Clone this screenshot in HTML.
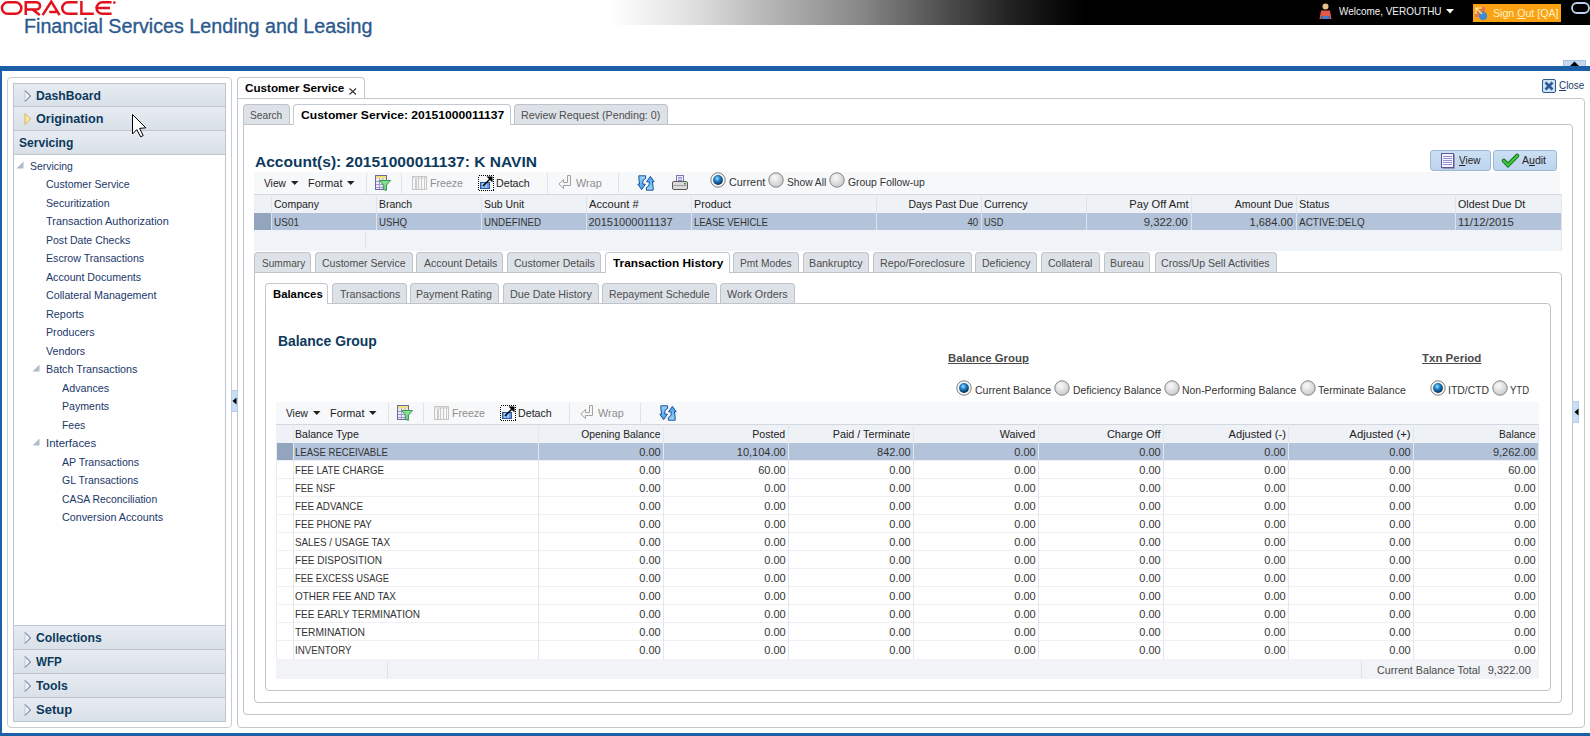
<!DOCTYPE html><html><head><meta charset="utf-8"><style>
*{box-sizing:border-box;margin:0;padding:0}
html,body{width:1590px;height:736px;overflow:hidden;background:#fff}
body{position:relative;font-family:"Liberation Sans",sans-serif;font-size:11px;color:#333}
.a{position:absolute}
.t{position:absolute;white-space:nowrap;line-height:1}
svg{position:absolute;overflow:visible}
</style></head><body>
<div class="a" style="left:0px;top:0px;width:1590px;height:25px;background:linear-gradient(to right,#fff 0px,#fff 610px,#f0f0f0 650px,#dcdcdc 700px,#bababa 760px,#888 860px,#444 960px,#222 1010px,#0a0a0a 1060px,#000 1085px,#000 1590px)"></div>
<svg style="left:0;top:0" width="120" height="18" viewBox="0 0 120 18">
<g fill="none" stroke="#e3111b" stroke-width="2.5">
<rect x="1.95" y="2.35" width="19.4" height="11.5" rx="5.75"/>
<path d="M25.75 15.1 V2.35 H36.65 A3.58 3.58 0 0 1 36.65 9.5 H27 M32.5 9.5 L39.8 15.1"/>
<path d="M42.6 15.1 L51.3 1.6 L59.6 15.1 M49.2 11.9 H56.6"/>
<path d="M77.6 2.35 H68 A5.75 5.75 0 0 0 68 13.85 H77.6"/>
<path d="M81.4 1.1 V13.85 H93.8"/>
<path d="M111.6 2.35 H102.3 A5.75 5.75 0 0 0 102.3 13.85 H111.6 M97.5 8.1 H110"/>
</g>
<circle cx="114.3" cy="2.6" r="1.3" fill="#e3111b"/>
</svg>
<div class="t" style="left:24.2px;top:16.30px;font-size:20px;color:#2c5a8e;transform:scaleX(0.9853);transform-origin:left 0;-webkit-text-stroke:0.35px #2c5a8e;">Financial Services Lending and Leasing</div>
<svg style="left:1319px;top:3px" width="14" height="18">
<circle cx="6.5" cy="3.5" r="3" fill="#e8c08a"/>
<path d="M2 7.5 H11 L12.5 16 H10.5 V13 H2.5 V16 H0.5 Z" fill="#e05a45"/>
<rect x="2.5" y="13" width="8" height="3" fill="#4a7ac8"/>
</svg>
<div class="t" style="left:1339px;top:6.20px;font-size:11px;color:#f2f2f2;transform:scaleX(0.9032);transform-origin:left 0;">Welcome, VEROUTHU</div>
<svg style="left:1446px;top:9px" width="8" height="5"><path d="M0 0 H8 L4 4.5 Z" fill="#fff"/></svg>
<div class="a" style="left:1473px;top:4px;width:88px;height:18px;background:#fba213"></div>
<svg style="left:1475px;top:7px" width="13" height="13">
<rect x="0" y="0" width="10" height="10" fill="#e0784a"/>
<circle cx="8" cy="9" r="4" fill="#3a8ad8"/>
<path d="M1 1 L7 7 M1 7 V1 H7" stroke="#ffe27a" stroke-width="1.5" fill="none"/>
</svg>
<div class="t" style="left:1493.3px;top:8.20px;font-size:11px;color:#fff3cc;transform:scaleX(0.9641);transform-origin:left 0;">Sign <u>O</u>ut [QA]</div>
<svg style="left:1571px;top:2px" width="19" height="12"><rect x="1" y="1" width="17" height="10" rx="5" fill="none" stroke="#bcd3f0" stroke-width="1.8"/></svg>
<div class="a" style="left:0px;top:66px;width:1590px;height:5px;background:#1c5fa6"></div>
<div class="a" style="left:0px;top:70px;width:2px;height:666px;background:#1c5fa6"></div>
<div class="a" style="left:0px;top:733px;width:1590px;height:3px;background:#1c5fa6"></div>
<div class="a" style="left:1563px;top:60px;width:23px;height:6px;background:#c4d7ee;border:1px solid #a9c1e0;border-bottom:none"></div>
<svg style="left:1570px;top:61px" width="9" height="5"><path d="M0 5 L4.5 0.5 L9 5 Z" fill="#000"/></svg>
<div class="a" style="left:7px;top:77px;width:225px;height:651px;border:1px solid #c8cccf;border-radius:4px"></div>
<div class="a" style="left:13px;top:154px;width:213px;height:471px;border-left:1px solid #bcc4ce;border-right:1px solid #bcc4ce"></div>
<div class="a" style="left:13px;top:83px;width:213px;height:24px;border:1px solid #bec5ce;background:linear-gradient(#e8ecf2,#d9e0e8)"></div>
<svg style="left:23.5px;top:89.5px" width="8" height="12"><path d="M1 0.5 L6.5 6 L1 11.5 Z" fill="#eef2f8" stroke="#b5c0d0" stroke-width="0.8"/><path d="M1 0.5 L6.5 6 L1 11.5" fill="none" stroke="#4f6788" stroke-width="0.9"/></svg>
<div class="t" style="left:36px;top:89.90px;font-size:12px;color:#0d395c;font-weight:bold;transform:scaleX(1.0123);transform-origin:left 0;">DashBoard</div>
<div class="a" style="left:13px;top:106px;width:213px;height:25px;border:1px solid #bec5ce;background:linear-gradient(#e8ecf2,#d9e0e8)"></div>
<svg style="left:23.5px;top:113.0px" width="8" height="12"><path d="M1 0.5 L6.5 6 L1 11.5 Z" fill="#fbeaa9" stroke="#d8b24e" stroke-width="1"/></svg>
<div class="t" style="left:36px;top:113.40px;font-size:12px;color:#0d395c;font-weight:bold;transform:scaleX(1.0552);transform-origin:left 0;">Origination</div>
<div class="a" style="left:13px;top:130px;width:213px;height:25px;border:1px solid #bec5ce;background:linear-gradient(#e8ecf2,#d9e0e8)"></div>
<div class="t" style="left:19px;top:137.40px;font-size:12px;color:#0d395c;font-weight:bold;transform:scaleX(1.0056);transform-origin:left 0;">Servicing</div>
<div class="a" style="left:13px;top:625px;width:213px;height:25px;border:1px solid #bec5ce;background:linear-gradient(#e8ecf2,#d9e0e8)"></div>
<svg style="left:23.5px;top:632.0px" width="8" height="12"><path d="M1 0.5 L6.5 6 L1 11.5 Z" fill="#eef2f8" stroke="#b5c0d0" stroke-width="0.8"/><path d="M1 0.5 L6.5 6 L1 11.5" fill="none" stroke="#4f6788" stroke-width="0.9"/></svg>
<div class="t" style="left:36px;top:632.40px;font-size:12px;color:#0d395c;font-weight:bold;transform:scaleX(1.0177);transform-origin:left 0;">Collections</div>
<div class="a" style="left:13px;top:649px;width:213px;height:25px;border:1px solid #bec5ce;background:linear-gradient(#e8ecf2,#d9e0e8)"></div>
<svg style="left:23.5px;top:656.0px" width="8" height="12"><path d="M1 0.5 L6.5 6 L1 11.5 Z" fill="#eef2f8" stroke="#b5c0d0" stroke-width="0.8"/><path d="M1 0.5 L6.5 6 L1 11.5" fill="none" stroke="#4f6788" stroke-width="0.9"/></svg>
<div class="t" style="left:36px;top:656.40px;font-size:12px;color:#0d395c;font-weight:bold;transform:scaleX(0.9679);transform-origin:left 0;">WFP</div>
<div class="a" style="left:13px;top:673px;width:213px;height:25px;border:1px solid #bec5ce;background:linear-gradient(#e8ecf2,#d9e0e8)"></div>
<svg style="left:23.5px;top:680.0px" width="8" height="12"><path d="M1 0.5 L6.5 6 L1 11.5 Z" fill="#eef2f8" stroke="#b5c0d0" stroke-width="0.8"/><path d="M1 0.5 L6.5 6 L1 11.5" fill="none" stroke="#4f6788" stroke-width="0.9"/></svg>
<div class="t" style="left:36px;top:680.40px;font-size:12px;color:#0d395c;font-weight:bold;transform:scaleX(1.0195);transform-origin:left 0;">Tools</div>
<div class="a" style="left:13px;top:697px;width:213px;height:25px;border:1px solid #bec5ce;background:linear-gradient(#e8ecf2,#d9e0e8)"></div>
<svg style="left:23.5px;top:704.0px" width="8" height="12"><path d="M1 0.5 L6.5 6 L1 11.5 Z" fill="#eef2f8" stroke="#b5c0d0" stroke-width="0.8"/><path d="M1 0.5 L6.5 6 L1 11.5" fill="none" stroke="#4f6788" stroke-width="0.9"/></svg>
<div class="t" style="left:36px;top:704.40px;font-size:12px;color:#0d395c;font-weight:bold;transform:scaleX(1.0892);transform-origin:left 0;">Setup</div>
<div class="t" style="left:30px;top:160.80px;font-size:11px;color:#1b376a;transform:scaleX(0.9459);transform-origin:left 0;">Servicing</div>
<svg style="left:15.5px;top:161.0px" width="8" height="8"><path d="M7.5 0.5 L7.5 7.5 L0.5 7.5 Z" fill="#b0bccb"/></svg>
<div class="t" style="left:46px;top:178.80px;font-size:11px;color:#1b376a;transform:scaleX(0.9573);transform-origin:left 0;">Customer Service</div>
<div class="t" style="left:46px;top:197.80px;font-size:11px;color:#1b376a;transform:scaleX(0.9627);transform-origin:left 0;">Securitization</div>
<div class="t" style="left:46px;top:215.80px;font-size:11px;color:#1b376a;transform:scaleX(0.9919);transform-origin:left 0;">Transaction Authorization</div>
<div class="t" style="left:46px;top:234.80px;font-size:11px;color:#1b376a;transform:scaleX(0.9569);transform-origin:left 0;">Post Date Checks</div>
<div class="t" style="left:46px;top:252.80px;font-size:11px;color:#1b376a;transform:scaleX(0.9673);transform-origin:left 0;">Escrow Transactions</div>
<div class="t" style="left:46px;top:271.80px;font-size:11px;color:#1b376a;transform:scaleX(0.9665);transform-origin:left 0;">Account Documents</div>
<div class="t" style="left:46px;top:289.80px;font-size:11px;color:#1b376a;transform:scaleX(0.9703);transform-origin:left 0;">Collateral Management</div>
<div class="t" style="left:46px;top:308.80px;font-size:11px;color:#1b376a;transform:scaleX(0.9862);transform-origin:left 0;">Reports</div>
<div class="t" style="left:46px;top:326.80px;font-size:11px;color:#1b376a;transform:scaleX(0.9670);transform-origin:left 0;">Producers</div>
<div class="t" style="left:46px;top:345.80px;font-size:11px;color:#1b376a;transform:scaleX(0.9705);transform-origin:left 0;">Vendors</div>
<div class="t" style="left:46px;top:363.80px;font-size:11px;color:#1b376a;transform:scaleX(0.9764);transform-origin:left 0;">Batch Transactions</div>
<svg style="left:31.5px;top:364.0px" width="8" height="8"><path d="M7.5 0.5 L7.5 7.5 L0.5 7.5 Z" fill="#b0bccb"/></svg>
<div class="t" style="left:62px;top:382.80px;font-size:11px;color:#1b376a;transform:scaleX(0.9763);transform-origin:left 0;">Advances</div>
<div class="t" style="left:62px;top:400.80px;font-size:11px;color:#1b376a;transform:scaleX(0.9645);transform-origin:left 0;">Payments</div>
<div class="t" style="left:62px;top:419.80px;font-size:11px;color:#1b376a;transform:scaleX(0.9481);transform-origin:left 0;">Fees</div>
<div class="t" style="left:46px;top:437.80px;font-size:11px;color:#1b376a;transform:scaleX(1.0384);transform-origin:left 0;">Interfaces</div>
<svg style="left:31.5px;top:438.0px" width="8" height="8"><path d="M7.5 0.5 L7.5 7.5 L0.5 7.5 Z" fill="#b0bccb"/></svg>
<div class="t" style="left:62px;top:456.80px;font-size:11px;color:#1b376a;transform:scaleX(0.9645);transform-origin:left 0;">AP Transactions</div>
<div class="t" style="left:62px;top:474.80px;font-size:11px;color:#1b376a;transform:scaleX(0.9569);transform-origin:left 0;">GL Transactions</div>
<div class="t" style="left:62px;top:493.80px;font-size:11px;color:#1b376a;transform:scaleX(0.9433);transform-origin:left 0;">CASA Reconciliation</div>
<div class="t" style="left:62px;top:511.80px;font-size:11px;color:#1b376a;transform:scaleX(0.9778);transform-origin:left 0;">Conversion Accounts</div>
<div class="a" style="left:237px;top:77px;width:128px;height:22px;border:1px solid #c3c7cb;border-bottom:none;border-radius:4px 4px 0 0"></div>
<div class="t" style="left:245px;top:83.00px;font-size:11px;color:#000;font-weight:bold;transform:scaleX(1.0610);transform-origin:left 0;">Customer Service</div>
<svg style="left:349px;top:88px" width="8" height="7"><path d="M0.5 0.5 L7 6.5 M7 0.5 L0.5 6.5" stroke="#333" stroke-width="1.1"/></svg>
<div class="a" style="left:237px;top:98px;width:1348px;height:630px;border:1px solid #c3c7cb;border-radius:0 4px 4px 4px"></div>
<svg style="left:1542px;top:79px" width="14" height="14">
<rect x="0.5" y="0.5" width="13" height="13" rx="1.5" fill="#cfe3f7" stroke="#2f5b8e"/>
<path d="M3.5 3.5 L10.5 10.5 M10.5 3.5 L3.5 10.5" stroke="#2c5a94" stroke-width="2.6"/>
</svg>
<div class="t" style="left:1558.5px;top:80.20px;font-size:11px;color:#1c3a6c;transform:scaleX(0.8960);transform-origin:left 0;"><u>C</u>lose</div>
<div class="a" style="left:243px;top:124px;width:1330px;height:591px;border:1px solid #c0c4c8;border-radius:0 4px 4px 4px"></div>
<div class="a" style="left:243px;top:104px;width:47px;height:20px;background:#dde2e8;border:1px solid #c0c4c8;border-bottom:none;border-radius:4px 4px 0 0"></div>
<div class="t" style="left:250.3px;top:110.20px;font-size:11px;color:#4d4d4d;transform:scaleX(0.9262);transform-origin:left 0;">Search</div>
<div class="a" style="left:293px;top:104px;width:218px;height:21px;background:#fff;border:1px solid #c3c9d1;border-bottom:none;border-radius:4px 4px 0 0"></div>
<div class="t" style="left:300.5px;top:110.20px;font-size:11px;color:#000;font-weight:bold;transform:scaleX(1.1004);transform-origin:left 0;">Customer Service: 20151000011137</div>
<div class="a" style="left:514px;top:104px;width:154px;height:20px;background:#dde2e8;border:1px solid #c0c4c8;border-bottom:none;border-radius:4px 4px 0 0"></div>
<div class="t" style="left:521px;top:110.20px;font-size:11px;color:#4d4d4d;transform:scaleX(0.9738);transform-origin:left 0;">Review Request (Pending: 0)</div>
<div class="t" style="left:255px;top:155.00px;font-size:14px;color:#0d3a5c;font-weight:bold;transform:scaleX(1.1090);transform-origin:left 0;">Account(s): 20151000011137: K NAVIN</div>
<div class="a" style="left:1430px;top:150px;width:61px;height:21px;border:1px solid #9cb8d8;border-radius:3px;background:linear-gradient(#cde0f4,#bdd4ed)"></div>
<svg style="left:1441px;top:153px" width="14" height="16"><rect x="0.5" y="0.5" width="12" height="14" fill="#f6f4fe" stroke="#5c579c"/><path d="M2 3.5 H11 M2 5.5 H11 M2 7.5 H11 M2 9.5 H11 M2 11.5 H11" stroke="#9890d0" stroke-width="1"/><path d="M13.5 1.5 V15.5 H1.5" stroke="#9a98b8" fill="none"/></svg>
<div class="t" style="left:1458.5px;top:154.70px;font-size:11px;color:#222;transform:scaleX(0.9010);transform-origin:left 0;"><u>V</u>iew</div>
<div class="a" style="left:1493px;top:150px;width:64px;height:21px;border:1px solid #9cb8d8;border-radius:3px;background:linear-gradient(#cde0f4,#bdd4ed)"></div>
<svg style="left:1502px;top:154px" width="17" height="13"><path d="M1.8 6.8 L6 11 L15.2 1.8" fill="none" stroke="#1a6e1f" stroke-width="4.2" stroke-linecap="round"/><path d="M1.8 6.8 L6 11 L15.2 1.8" fill="none" stroke="#3cc53c" stroke-width="2.4" stroke-linecap="round"/></svg>
<div class="t" style="left:1522px;top:154.70px;font-size:11px;color:#222;transform:scaleX(0.9564);transform-origin:left 0;">A<u>u</u>dit</div>
<div class="a" style="left:254px;top:172px;width:1306px;height:22px;background:#f6f8fa"></div>
<div class="t" style="left:264px;top:177.90px;font-size:11px;color:#222;transform:scaleX(0.9264);transform-origin:left 0;">View</div>
<svg style="left:290.5px;top:181px" width="8" height="5"><path d="M0 0 H7.5 L3.75 4 Z" fill="#222"/></svg>
<div class="t" style="left:308px;top:177.90px;font-size:11px;color:#222;transform:scaleX(0.9873);transform-origin:left 0;">Format</div>
<svg style="left:346.5px;top:181px" width="8" height="5"><path d="M0 0 H7.5 L3.75 4 Z" fill="#222"/></svg>
<div class="a" style="left:365.5px;top:173px;width:1px;height:20px;background:#dfe3e8"></div>
<div class="a" style="left:400.5px;top:173px;width:1px;height:20px;background:#dfe3e8"></div>
<div class="a" style="left:546.5px;top:173px;width:1px;height:20px;background:#dfe3e8"></div>
<div class="a" style="left:618px;top:173px;width:1px;height:20px;background:#dfe3e8"></div>
<svg style="left:374px;top:175px" width="17" height="16">
<rect x="1.5" y="0.5" width="11" height="14" fill="#eeeaf8" stroke="#6c68a6"/>
<rect x="2" y="1" width="10" height="2.5" fill="#f2e07c"/>
<path d="M2 6.5 H12 M2 9.5 H12 M2 12.5 H12 M5.5 3.5 V14 M9 3.5 V14" stroke="#a39bd0" stroke-width="1"/>
<path d="M5.5 5.5 H16.5 L12.3 10.3 V15.5 L9.7 14.3 V10.3 Z" fill="#86dd95" stroke="#3b9a4b" stroke-width="1"/>
</svg>
<svg style="left:412px;top:176px" width="15" height="14" shape-rendering="crispEdges">
<rect x="0.5" y="0.5" width="14" height="13" fill="#f7f7f7" stroke="#c6c6c6"/>
<rect x="1" y="1" width="13" height="2" fill="#e2e2e2"/>
<rect x="3" y="3" width="2" height="10" fill="#cdcdcd"/>
<path d="M6.5 1 V13 M9.5 1 V13 M12 1 V13" stroke="#c9c9c9"/>
</svg>
<div class="t" style="left:430px;top:177.90px;font-size:11px;color:#8e8e8e;transform:scaleX(0.9635);transform-origin:left 0;">Freeze</div>
<svg style="left:478px;top:175px" width="16" height="16">
<rect x="0.5" y="0.5" width="15" height="15" fill="none" stroke="#000" stroke-width="1" stroke-dasharray="1 1" shape-rendering="crispEdges"/>
<rect x="2.5" y="7.5" width="9" height="6" fill="#6a9be0" stroke="#2b59a6"/>
<path d="M5 8 V13 M8 8 V13" stroke="#d7e6f8" stroke-width="1"/>
<path d="M5 11 L12.5 3.5" stroke="#000" stroke-width="1.5"/>
<path d="M14.5 1.5 V7.5 L8.5 1.5 Z" fill="#000"/>
</svg>
<div class="t" style="left:496px;top:177.90px;font-size:11px;color:#222;transform:scaleX(0.9692);transform-origin:left 0;">Detach</div>
<svg style="left:558px;top:175px" width="14" height="15">
<path d="M9.5 0.5 H12.5 V10.5 H5.5 V13.5 L0.8 9 L5.5 4.5 V7.5 H9.5 Z" fill="#f5f5f5" stroke="#a3a3a3" stroke-width="1"/>
</svg>
<div class="t" style="left:576px;top:177.90px;font-size:11px;color:#8e8e8e;transform:scaleX(0.9855);transform-origin:left 0;">Wrap</div>
<svg style="left:638px;top:175px" width="16" height="16">
<defs><linearGradient id="rf254" x1="0" y1="0" x2="0" y2="1"><stop offset="0" stop-color="#9ad8fb"/><stop offset="1" stop-color="#3d9ff0"/></linearGradient></defs>
<path id="rfa254" d="M0.8 0.8 H7.6 V3.6 Q4.8 4.2 4.8 7 V9.2 H7.4 L3.6 14.6 L-0.2 9.2 H1.6 Q0.8 5.5 0.8 0.8 Z" fill="url(#rf254)" stroke="#1b4f9e" stroke-width="1"/>
<path d="M0.8 0.8 H7.6 V3.6 Q4.8 4.2 4.8 7 V9.2 H7.4 L3.6 14.6 L-0.2 9.2 H1.6 Q0.8 5.5 0.8 0.8 Z" transform="rotate(180 8 8)" fill="url(#rf254)" stroke="#1b4f9e" stroke-width="1"/>
</svg>
<svg style="left:672px;top:175px" width="16" height="16">
<rect x="4.5" y="0.5" width="7" height="7" fill="#eeedfb" stroke="#7c79b3"/>
<path d="M6 2.5 H10 M6 4 H10 M6 5.5 H10" stroke="#8f8cc8" stroke-width="0.9"/>
<rect x="0.5" y="6.5" width="15" height="8" rx="1.5" fill="#dadada" stroke="#5a5a5a"/>
<path d="M1.5 10.5 H14.5" stroke="#a0a0a0"/>
<rect x="12" y="8" width="2" height="1.5" fill="#32a032"/>
</svg>
<svg style="left:709.7px;top:171.7px" width="16" height="16">
<defs><radialGradient id="rb717" cx="0.42" cy="0.35" r="0.65"><stop offset="0" stop-color="#9ddcff"/><stop offset="0.45" stop-color="#1f7fc6"/><stop offset="1" stop-color="#062a4e"/></radialGradient></defs>
<circle cx="8" cy="8" r="7.2" fill="#f8f8f8" stroke="#7c7c7c" stroke-width="1"/>
<circle cx="8" cy="8" r="4.9" fill="url(#rb717)"/>
</svg>
<div class="t" style="left:728.5px;top:177.00px;font-size:11px;color:#333;transform:scaleX(0.9867);transform-origin:left 0;">Current</div>
<svg style="left:767.5px;top:171.7px" width="16" height="16">
<defs><radialGradient id="rg775" cx="0.4" cy="0.35" r="0.7"><stop offset="0" stop-color="#fafafa"/><stop offset="1" stop-color="#c8c8c8"/></radialGradient></defs>
<circle cx="8" cy="8" r="7.2" fill="url(#rg775)" stroke="#858585" stroke-width="1"/>
</svg>
<div class="t" style="left:786.5px;top:177.00px;font-size:11px;color:#333;transform:scaleX(0.9288);transform-origin:left 0;">Show All</div>
<svg style="left:828.7px;top:171.7px" width="16" height="16">
<defs><radialGradient id="rg836" cx="0.4" cy="0.35" r="0.7"><stop offset="0" stop-color="#fafafa"/><stop offset="1" stop-color="#c8c8c8"/></radialGradient></defs>
<circle cx="8" cy="8" r="7.2" fill="url(#rg836)" stroke="#858585" stroke-width="1"/>
</svg>
<div class="t" style="left:848px;top:177.00px;font-size:11px;color:#333;transform:scaleX(0.9454);transform-origin:left 0;">Group Follow-up</div>
<div class="a" style="left:254px;top:194px;width:1307px;height:57px;background:#f0f3f7"></div>
<div class="a" style="left:254px;top:194px;width:1307px;height:19px;background:#eef1f5;border-top:1px solid #d3d8de"></div>
<div class="a" style="left:254px;top:213px;width:1307px;height:17px;background:#b3c3da"></div>
<div class="a" style="left:254px;top:213px;width:17px;height:17px;background:#93a5be"></div>
<div class="a" style="left:271px;top:194px;width:1px;height:36px;background:#dde3ea"></div>
<div class="a" style="left:376px;top:194px;width:1px;height:36px;background:#dde3ea"></div>
<div class="a" style="left:481px;top:194px;width:1px;height:36px;background:#dde3ea"></div>
<div class="a" style="left:586px;top:194px;width:1px;height:36px;background:#dde3ea"></div>
<div class="a" style="left:691px;top:194px;width:1px;height:36px;background:#dde3ea"></div>
<div class="a" style="left:876px;top:194px;width:1px;height:36px;background:#dde3ea"></div>
<div class="a" style="left:981px;top:194px;width:1px;height:36px;background:#dde3ea"></div>
<div class="a" style="left:1086px;top:194px;width:1px;height:36px;background:#dde3ea"></div>
<div class="a" style="left:1191px;top:194px;width:1px;height:36px;background:#dde3ea"></div>
<div class="a" style="left:1296px;top:194px;width:1px;height:36px;background:#dde3ea"></div>
<div class="a" style="left:1455px;top:194px;width:1px;height:36px;background:#dde3ea"></div>
<div class="a" style="left:1561px;top:194px;width:1px;height:57px;background:#e3e7ec"></div>
<div class="t" style="left:273.5px;top:199.20px;font-size:11px;color:#222;transform:scaleX(0.9534);transform-origin:left 0;">Company</div>
<div class="t" style="left:273.5px;top:217.10px;font-size:11px;color:#333;transform:scaleX(0.9081);transform-origin:left 0;">US01</div>
<div class="t" style="left:378.5px;top:199.20px;font-size:11px;color:#222;transform:scaleX(0.9462);transform-origin:left 0;">Branch</div>
<div class="t" style="left:378.5px;top:217.10px;font-size:11px;color:#333;transform:scaleX(0.8810);transform-origin:left 0;">USHQ</div>
<div class="t" style="left:483.5px;top:199.20px;font-size:11px;color:#222;transform:scaleX(0.9522);transform-origin:left 0;">Sub Unit</div>
<div class="t" style="left:483.5px;top:217.10px;font-size:11px;color:#333;transform:scaleX(0.8885);transform-origin:left 0;">UNDEFINED</div>
<div class="t" style="left:588.5px;top:199.20px;font-size:11px;color:#222;transform:scaleX(1.0149);transform-origin:left 0;">Account #</div>
<div class="t" style="left:588.5px;top:217.10px;font-size:11px;color:#333;">20151000011137</div>
<div class="t" style="left:693.5px;top:199.20px;font-size:11px;color:#222;transform:scaleX(0.9779);transform-origin:left 0;">Product</div>
<div class="t" style="left:693.5px;top:217.10px;font-size:11px;color:#333;transform:scaleX(0.8639);transform-origin:left 0;">LEASE VEHICLE</div>
<div class="t" style="right:612px;top:199.20px;font-size:11px;color:#222;transform:scaleX(0.9536);transform-origin:right 0;">Days Past Due</div>
<div class="t" style="right:612px;top:217.10px;font-size:11px;color:#333;transform:scaleX(0.8816);transform-origin:right 0;">40</div>
<div class="t" style="left:983.5px;top:199.20px;font-size:11px;color:#222;transform:scaleX(0.9793);transform-origin:left 0;">Currency</div>
<div class="t" style="left:983.5px;top:217.10px;font-size:11px;color:#333;transform:scaleX(0.8312);transform-origin:left 0;">USD</div>
<div class="t" style="right:402px;top:199.20px;font-size:11px;color:#222;transform:scaleX(1.0114);transform-origin:right 0;">Pay Off Amt</div>
<div class="t" style="right:402px;top:217.10px;font-size:11px;color:#333;transform:scaleX(1.0309);transform-origin:right 0;">9,322.00</div>
<div class="t" style="right:297px;top:199.20px;font-size:11px;color:#222;transform:scaleX(0.9544);transform-origin:right 0;">Amount Due</div>
<div class="t" style="right:297px;top:217.10px;font-size:11px;color:#333;transform:scaleX(1.0099);transform-origin:right 0;">1,684.00</div>
<div class="t" style="left:1298.5px;top:199.20px;font-size:11px;color:#222;transform:scaleX(0.9770);transform-origin:left 0;">Status</div>
<div class="t" style="left:1298.5px;top:217.10px;font-size:11px;color:#333;transform:scaleX(0.9041);transform-origin:left 0;">ACTIVE:DELQ</div>
<div class="t" style="left:1457.5px;top:199.20px;font-size:11px;color:#222;transform:scaleX(0.9736);transform-origin:left 0;">Oldest Due Dt</div>
<div class="t" style="left:1457.5px;top:217.10px;font-size:11px;color:#333;transform:scaleX(1.0311);transform-origin:left 0;">11/12/2015</div>
<div class="a" style="left:365px;top:232px;width:1px;height:16px;background:#dde2e8"></div>
<div class="a" style="left:254px;top:272px;width:1308px;height:431px;border:1px solid #c0c4c8;border-radius:0 4px 4px 4px"></div>
<div class="a" style="left:254px;top:252px;width:57px;height:20px;background:#dde2e8;border:1px solid #c0c4c8;border-bottom:none;border-radius:4px 4px 0 0"></div>
<div class="t" style="left:262px;top:258.20px;font-size:11px;color:#4d4d4d;transform:scaleX(0.9179);transform-origin:left 0;">Summary</div>
<div class="a" style="left:315px;top:252px;width:98px;height:20px;background:#dde2e8;border:1px solid #c0c4c8;border-bottom:none;border-radius:4px 4px 0 0"></div>
<div class="t" style="left:322.4px;top:258.20px;font-size:11px;color:#4d4d4d;transform:scaleX(0.9550);transform-origin:left 0;">Customer Service</div>
<div class="a" style="left:416px;top:252px;width:87px;height:20px;background:#dde2e8;border:1px solid #c0c4c8;border-bottom:none;border-radius:4px 4px 0 0"></div>
<div class="t" style="left:423.6px;top:258.20px;font-size:11px;color:#4d4d4d;transform:scaleX(0.9586);transform-origin:left 0;">Account Details</div>
<div class="a" style="left:507px;top:252px;width:94px;height:20px;background:#dde2e8;border:1px solid #c0c4c8;border-bottom:none;border-radius:4px 4px 0 0"></div>
<div class="t" style="left:513.9px;top:258.20px;font-size:11px;color:#4d4d4d;transform:scaleX(0.9588);transform-origin:left 0;">Customer Details</div>
<div class="a" style="left:605px;top:252px;width:125px;height:21px;background:#fff;border:1px solid #c3c9d1;border-bottom:none;border-radius:4px 4px 0 0"></div>
<div class="t" style="left:612.8px;top:258.20px;font-size:11px;color:#000;font-weight:bold;transform:scaleX(1.0736);transform-origin:left 0;">Transaction History</div>
<div class="a" style="left:733px;top:252px;width:66px;height:20px;background:#dde2e8;border:1px solid #c0c4c8;border-bottom:none;border-radius:4px 4px 0 0"></div>
<div class="t" style="left:739.7px;top:258.20px;font-size:11px;color:#4d4d4d;transform:scaleX(0.9271);transform-origin:left 0;">Pmt Modes</div>
<div class="a" style="left:803px;top:252px;width:66px;height:20px;background:#dde2e8;border:1px solid #c0c4c8;border-bottom:none;border-radius:4px 4px 0 0"></div>
<div class="t" style="left:808.7px;top:258.20px;font-size:11px;color:#4d4d4d;transform:scaleX(0.9753);transform-origin:left 0;">Bankruptcy</div>
<div class="a" style="left:873px;top:252px;width:99px;height:20px;background:#dde2e8;border:1px solid #c0c4c8;border-bottom:none;border-radius:4px 4px 0 0"></div>
<div class="t" style="left:879.6px;top:258.20px;font-size:11px;color:#4d4d4d;transform:scaleX(0.9706);transform-origin:left 0;">Repo/Foreclosure</div>
<div class="a" style="left:975px;top:252px;width:62px;height:20px;background:#dde2e8;border:1px solid #c0c4c8;border-bottom:none;border-radius:4px 4px 0 0"></div>
<div class="t" style="left:981.7px;top:258.20px;font-size:11px;color:#4d4d4d;transform:scaleX(0.9576);transform-origin:left 0;">Deficiency</div>
<div class="a" style="left:1041px;top:252px;width:59px;height:20px;background:#dde2e8;border:1px solid #c0c4c8;border-bottom:none;border-radius:4px 4px 0 0"></div>
<div class="t" style="left:1048.3px;top:258.20px;font-size:11px;color:#4d4d4d;transform:scaleX(0.9555);transform-origin:left 0;">Collateral</div>
<div class="a" style="left:1104px;top:252px;width:46px;height:20px;background:#dde2e8;border:1px solid #c0c4c8;border-bottom:none;border-radius:4px 4px 0 0"></div>
<div class="t" style="left:1109.8px;top:258.20px;font-size:11px;color:#4d4d4d;transform:scaleX(0.9521);transform-origin:left 0;">Bureau</div>
<div class="a" style="left:1155px;top:252px;width:122px;height:20px;background:#dde2e8;border:1px solid #c0c4c8;border-bottom:none;border-radius:4px 4px 0 0"></div>
<div class="t" style="left:1161.2px;top:258.20px;font-size:11px;color:#4d4d4d;transform:scaleX(0.9601);transform-origin:left 0;">Cross/Up Sell Activities</div>
<div class="a" style="left:265px;top:303px;width:1286px;height:388px;border:1px solid #c0c4c8;border-radius:0 4px 4px 4px"></div>
<div class="a" style="left:265px;top:283px;width:63px;height:21px;background:#fff;border:1px solid #c3c9d1;border-bottom:none;border-radius:4px 4px 0 0"></div>
<div class="t" style="left:272.6px;top:289.20px;font-size:11px;color:#000;font-weight:bold;transform:scaleX(1.0281);transform-origin:left 0;">Balances</div>
<div class="a" style="left:332px;top:283px;width:75px;height:20px;background:#dde2e8;border:1px solid #c0c4c8;border-bottom:none;border-radius:4px 4px 0 0"></div>
<div class="t" style="left:339.8px;top:289.20px;font-size:11px;color:#4d4d4d;transform:scaleX(0.9634);transform-origin:left 0;">Transactions</div>
<div class="a" style="left:410px;top:283px;width:89px;height:20px;background:#dde2e8;border:1px solid #c0c4c8;border-bottom:none;border-radius:4px 4px 0 0"></div>
<div class="t" style="left:416.4px;top:289.20px;font-size:11px;color:#4d4d4d;transform:scaleX(0.9705);transform-origin:left 0;">Payment Rating</div>
<div class="a" style="left:503px;top:283px;width:96px;height:20px;background:#dde2e8;border:1px solid #c0c4c8;border-bottom:none;border-radius:4px 4px 0 0"></div>
<div class="t" style="left:510px;top:289.20px;font-size:11px;color:#4d4d4d;transform:scaleX(0.9764);transform-origin:left 0;">Due Date History</div>
<div class="a" style="left:602px;top:283px;width:115px;height:20px;background:#dde2e8;border:1px solid #c0c4c8;border-bottom:none;border-radius:4px 4px 0 0"></div>
<div class="t" style="left:608.9px;top:289.20px;font-size:11px;color:#4d4d4d;transform:scaleX(0.9558);transform-origin:left 0;">Repayment Schedule</div>
<div class="a" style="left:720px;top:283px;width:75px;height:20px;background:#dde2e8;border:1px solid #c0c4c8;border-bottom:none;border-radius:4px 4px 0 0"></div>
<div class="t" style="left:727.2px;top:289.20px;font-size:11px;color:#4d4d4d;transform:scaleX(0.9768);transform-origin:left 0;">Work Orders</div>
<div class="t" style="left:277.5px;top:333.50px;font-size:14px;color:#0d3a5c;font-weight:bold;transform:scaleX(0.9925);transform-origin:left 0;">Balance Group</div>
<div class="t" style="left:948px;top:352.60px;font-size:11px;color:#4a4a4a;font-weight:bold;transform:scaleX(1.0335);transform-origin:left 0;"><u>Balance Group</u></div>
<div class="t" style="left:1422px;top:352.60px;font-size:11px;color:#4a4a4a;font-weight:bold;transform:scaleX(1.0444);transform-origin:left 0;"><u>Txn Period</u></div>
<svg style="left:956px;top:380px" width="16" height="16">
<defs><radialGradient id="rb964" cx="0.42" cy="0.35" r="0.65"><stop offset="0" stop-color="#9ddcff"/><stop offset="0.45" stop-color="#1f7fc6"/><stop offset="1" stop-color="#062a4e"/></radialGradient></defs>
<circle cx="8" cy="8" r="7.2" fill="#f8f8f8" stroke="#7c7c7c" stroke-width="1"/>
<circle cx="8" cy="8" r="4.9" fill="url(#rb964)"/>
</svg>
<div class="t" style="left:975px;top:384.90px;font-size:11px;color:#333;transform:scaleX(0.9581);transform-origin:left 0;">Current Balance</div>
<svg style="left:1054px;top:380px" width="16" height="16">
<defs><radialGradient id="rg1062" cx="0.4" cy="0.35" r="0.7"><stop offset="0" stop-color="#fafafa"/><stop offset="1" stop-color="#c8c8c8"/></radialGradient></defs>
<circle cx="8" cy="8" r="7.2" fill="url(#rg1062)" stroke="#858585" stroke-width="1"/>
</svg>
<div class="t" style="left:1072.5px;top:384.90px;font-size:11px;color:#333;transform:scaleX(0.9434);transform-origin:left 0;">Deficiency Balance</div>
<svg style="left:1164px;top:380px" width="16" height="16">
<defs><radialGradient id="rg1172" cx="0.4" cy="0.35" r="0.7"><stop offset="0" stop-color="#fafafa"/><stop offset="1" stop-color="#c8c8c8"/></radialGradient></defs>
<circle cx="8" cy="8" r="7.2" fill="url(#rg1172)" stroke="#858585" stroke-width="1"/>
</svg>
<div class="t" style="left:1182px;top:384.90px;font-size:11px;color:#333;transform:scaleX(0.9485);transform-origin:left 0;">Non-Performing Balance</div>
<svg style="left:1300px;top:380px" width="16" height="16">
<defs><radialGradient id="rg1308" cx="0.4" cy="0.35" r="0.7"><stop offset="0" stop-color="#fafafa"/><stop offset="1" stop-color="#c8c8c8"/></radialGradient></defs>
<circle cx="8" cy="8" r="7.2" fill="url(#rg1308)" stroke="#858585" stroke-width="1"/>
</svg>
<div class="t" style="left:1318px;top:384.90px;font-size:11px;color:#333;transform:scaleX(0.9643);transform-origin:left 0;">Terminate Balance</div>
<svg style="left:1430px;top:380px" width="16" height="16">
<defs><radialGradient id="rb1438" cx="0.42" cy="0.35" r="0.65"><stop offset="0" stop-color="#9ddcff"/><stop offset="0.45" stop-color="#1f7fc6"/><stop offset="1" stop-color="#062a4e"/></radialGradient></defs>
<circle cx="8" cy="8" r="7.2" fill="#f8f8f8" stroke="#7c7c7c" stroke-width="1"/>
<circle cx="8" cy="8" r="4.9" fill="url(#rb1438)"/>
</svg>
<div class="t" style="left:1448px;top:384.90px;font-size:11px;color:#333;transform:scaleX(0.9452);transform-origin:left 0;">ITD/CTD</div>
<svg style="left:1492px;top:380px" width="16" height="16">
<defs><radialGradient id="rg1500" cx="0.4" cy="0.35" r="0.7"><stop offset="0" stop-color="#fafafa"/><stop offset="1" stop-color="#c8c8c8"/></radialGradient></defs>
<circle cx="8" cy="8" r="7.2" fill="url(#rg1500)" stroke="#858585" stroke-width="1"/>
</svg>
<div class="t" style="left:1510px;top:384.90px;font-size:11px;color:#333;transform:scaleX(0.8636);transform-origin:left 0;">YTD</div>
<div class="a" style="left:276px;top:402px;width:1263px;height:22px;background:#f6f8fa"></div>
<div class="t" style="left:286px;top:407.90px;font-size:11px;color:#222;transform:scaleX(0.9264);transform-origin:left 0;">View</div>
<svg style="left:312.5px;top:411px" width="8" height="5"><path d="M0 0 H7.5 L3.75 4 Z" fill="#222"/></svg>
<div class="t" style="left:330px;top:407.90px;font-size:11px;color:#222;transform:scaleX(0.9873);transform-origin:left 0;">Format</div>
<svg style="left:368.5px;top:411px" width="8" height="5"><path d="M0 0 H7.5 L3.75 4 Z" fill="#222"/></svg>
<div class="a" style="left:387.5px;top:403px;width:1px;height:20px;background:#dfe3e8"></div>
<div class="a" style="left:422.5px;top:403px;width:1px;height:20px;background:#dfe3e8"></div>
<div class="a" style="left:568.5px;top:403px;width:1px;height:20px;background:#dfe3e8"></div>
<div class="a" style="left:640px;top:403px;width:1px;height:20px;background:#dfe3e8"></div>
<svg style="left:396px;top:405px" width="17" height="16">
<rect x="1.5" y="0.5" width="11" height="14" fill="#eeeaf8" stroke="#6c68a6"/>
<rect x="2" y="1" width="10" height="2.5" fill="#f2e07c"/>
<path d="M2 6.5 H12 M2 9.5 H12 M2 12.5 H12 M5.5 3.5 V14 M9 3.5 V14" stroke="#a39bd0" stroke-width="1"/>
<path d="M5.5 5.5 H16.5 L12.3 10.3 V15.5 L9.7 14.3 V10.3 Z" fill="#86dd95" stroke="#3b9a4b" stroke-width="1"/>
</svg>
<svg style="left:434px;top:406px" width="15" height="14" shape-rendering="crispEdges">
<rect x="0.5" y="0.5" width="14" height="13" fill="#f7f7f7" stroke="#c6c6c6"/>
<rect x="1" y="1" width="13" height="2" fill="#e2e2e2"/>
<rect x="3" y="3" width="2" height="10" fill="#cdcdcd"/>
<path d="M6.5 1 V13 M9.5 1 V13 M12 1 V13" stroke="#c9c9c9"/>
</svg>
<div class="t" style="left:452px;top:407.90px;font-size:11px;color:#8e8e8e;transform:scaleX(0.9635);transform-origin:left 0;">Freeze</div>
<svg style="left:500px;top:405px" width="16" height="16">
<rect x="0.5" y="0.5" width="15" height="15" fill="none" stroke="#000" stroke-width="1" stroke-dasharray="1 1" shape-rendering="crispEdges"/>
<rect x="2.5" y="7.5" width="9" height="6" fill="#6a9be0" stroke="#2b59a6"/>
<path d="M5 8 V13 M8 8 V13" stroke="#d7e6f8" stroke-width="1"/>
<path d="M5 11 L12.5 3.5" stroke="#000" stroke-width="1.5"/>
<path d="M14.5 1.5 V7.5 L8.5 1.5 Z" fill="#000"/>
</svg>
<div class="t" style="left:518px;top:407.90px;font-size:11px;color:#222;transform:scaleX(0.9692);transform-origin:left 0;">Detach</div>
<svg style="left:580px;top:405px" width="14" height="15">
<path d="M9.5 0.5 H12.5 V10.5 H5.5 V13.5 L0.8 9 L5.5 4.5 V7.5 H9.5 Z" fill="#f5f5f5" stroke="#a3a3a3" stroke-width="1"/>
</svg>
<div class="t" style="left:598px;top:407.90px;font-size:11px;color:#8e8e8e;transform:scaleX(0.9855);transform-origin:left 0;">Wrap</div>
<svg style="left:660px;top:405px" width="16" height="16">
<defs><linearGradient id="rf276" x1="0" y1="0" x2="0" y2="1"><stop offset="0" stop-color="#9ad8fb"/><stop offset="1" stop-color="#3d9ff0"/></linearGradient></defs>
<path id="rfa276" d="M0.8 0.8 H7.6 V3.6 Q4.8 4.2 4.8 7 V9.2 H7.4 L3.6 14.6 L-0.2 9.2 H1.6 Q0.8 5.5 0.8 0.8 Z" fill="url(#rf276)" stroke="#1b4f9e" stroke-width="1"/>
<path d="M0.8 0.8 H7.6 V3.6 Q4.8 4.2 4.8 7 V9.2 H7.4 L3.6 14.6 L-0.2 9.2 H1.6 Q0.8 5.5 0.8 0.8 Z" transform="rotate(180 8 8)" fill="url(#rf276)" stroke="#1b4f9e" stroke-width="1"/>
</svg>
<div class="a" style="left:276px;top:424px;width:1263px;height:19px;background:#eef1f5;border-top:1px solid #d3d8de"></div>
<div class="a" style="left:276px;top:443px;width:1263px;height:216px;background:#fff"></div>
<div class="a" style="left:276px;top:443px;width:1263px;height:17px;background:#b3c3da"></div>
<div class="a" style="left:276px;top:443px;width:17px;height:17px;background:#93a5be"></div>
<div class="a" style="left:276px;top:460px;width:1263px;height:1px;background:#eef0f3"></div>
<div class="a" style="left:276px;top:478px;width:1263px;height:1px;background:#eef0f3"></div>
<div class="a" style="left:276px;top:496px;width:1263px;height:1px;background:#eef0f3"></div>
<div class="a" style="left:276px;top:514px;width:1263px;height:1px;background:#eef0f3"></div>
<div class="a" style="left:276px;top:532px;width:1263px;height:1px;background:#eef0f3"></div>
<div class="a" style="left:276px;top:550px;width:1263px;height:1px;background:#eef0f3"></div>
<div class="a" style="left:276px;top:568px;width:1263px;height:1px;background:#eef0f3"></div>
<div class="a" style="left:276px;top:586px;width:1263px;height:1px;background:#eef0f3"></div>
<div class="a" style="left:276px;top:604px;width:1263px;height:1px;background:#eef0f3"></div>
<div class="a" style="left:276px;top:622px;width:1263px;height:1px;background:#eef0f3"></div>
<div class="a" style="left:276px;top:640px;width:1263px;height:1px;background:#eef0f3"></div>
<div class="a" style="left:276px;top:659px;width:1263px;height:20px;background:#f1f3f7"></div>
<div class="a" style="left:293px;top:424px;width:1px;height:235px;background:#e3e7ec"></div>
<div class="a" style="left:538px;top:424px;width:1px;height:235px;background:#e3e7ec"></div>
<div class="a" style="left:663px;top:424px;width:1px;height:235px;background:#e3e7ec"></div>
<div class="a" style="left:788px;top:424px;width:1px;height:235px;background:#e3e7ec"></div>
<div class="a" style="left:913px;top:424px;width:1px;height:235px;background:#e3e7ec"></div>
<div class="a" style="left:1038px;top:424px;width:1px;height:235px;background:#e3e7ec"></div>
<div class="a" style="left:1163px;top:424px;width:1px;height:235px;background:#e3e7ec"></div>
<div class="a" style="left:1288px;top:424px;width:1px;height:235px;background:#e3e7ec"></div>
<div class="a" style="left:1413px;top:424px;width:1px;height:235px;background:#e3e7ec"></div>
<div class="a" style="left:1538px;top:424px;width:1px;height:235px;background:#e3e7ec"></div>
<div class="a" style="left:276px;top:443px;width:1px;height:216px;background:#e8ebef"></div>
<div class="t" style="left:294.8px;top:428.60px;font-size:11px;color:#222;transform:scaleX(0.9594);transform-origin:left 0;">Balance Type</div>
<div class="t" style="right:929.5px;top:428.60px;font-size:11px;color:#222;transform:scaleX(0.9376);transform-origin:right 0;">Opening Balance</div>
<div class="t" style="right:804.5px;top:428.60px;font-size:11px;color:#222;transform:scaleX(0.9626);transform-origin:right 0;">Posted</div>
<div class="t" style="right:679.5px;top:428.60px;font-size:11px;color:#222;transform:scaleX(0.9782);transform-origin:right 0;">Paid / Terminate</div>
<div class="t" style="right:554.5px;top:428.60px;font-size:11px;color:#222;transform:scaleX(0.9812);transform-origin:right 0;">Waived</div>
<div class="t" style="right:429.5px;top:428.60px;font-size:11px;color:#222;">Charge Off</div>
<div class="t" style="right:304.5px;top:428.60px;font-size:11px;color:#222;transform:scaleX(1.0075);transform-origin:right 0;">Adjusted (-)</div>
<div class="t" style="right:179.5px;top:428.60px;font-size:11px;color:#222;transform:scaleX(1.0278);transform-origin:right 0;">Adjusted (+)</div>
<div class="t" style="right:54.5px;top:428.60px;font-size:11px;color:#222;transform:scaleX(0.9251);transform-origin:right 0;">Balance</div>
<div class="t" style="left:294.8px;top:446.60px;font-size:11px;color:#333;transform:scaleX(0.8702);transform-origin:left 0;">LEASE RECEIVABLE</div>
<div class="t" style="right:929.3px;top:446.60px;font-size:11px;color:#333;">0.00</div>
<div class="t" style="right:804.3px;top:446.60px;font-size:11px;color:#333;">10,104.00</div>
<div class="t" style="right:679.3px;top:446.60px;font-size:11px;color:#333;">842.00</div>
<div class="t" style="right:554.3px;top:446.60px;font-size:11px;color:#333;">0.00</div>
<div class="t" style="right:429.29999999999995px;top:446.60px;font-size:11px;color:#333;">0.00</div>
<div class="t" style="right:304.29999999999995px;top:446.60px;font-size:11px;color:#333;">0.00</div>
<div class="t" style="right:179.29999999999995px;top:446.60px;font-size:11px;color:#333;">0.00</div>
<div class="t" style="right:54.299999999999955px;top:446.60px;font-size:11px;color:#333;">9,262.00</div>
<div class="t" style="left:294.8px;top:464.60px;font-size:11px;color:#333;transform:scaleX(0.8785);transform-origin:left 0;">FEE LATE CHARGE</div>
<div class="t" style="right:929.3px;top:464.60px;font-size:11px;color:#333;">0.00</div>
<div class="t" style="right:804.3px;top:464.60px;font-size:11px;color:#333;">60.00</div>
<div class="t" style="right:679.3px;top:464.60px;font-size:11px;color:#333;">0.00</div>
<div class="t" style="right:554.3px;top:464.60px;font-size:11px;color:#333;">0.00</div>
<div class="t" style="right:429.29999999999995px;top:464.60px;font-size:11px;color:#333;">0.00</div>
<div class="t" style="right:304.29999999999995px;top:464.60px;font-size:11px;color:#333;">0.00</div>
<div class="t" style="right:179.29999999999995px;top:464.60px;font-size:11px;color:#333;">0.00</div>
<div class="t" style="right:54.299999999999955px;top:464.60px;font-size:11px;color:#333;">60.00</div>
<div class="t" style="left:294.8px;top:482.60px;font-size:11px;color:#333;transform:scaleX(0.8608);transform-origin:left 0;">FEE NSF</div>
<div class="t" style="right:929.3px;top:482.60px;font-size:11px;color:#333;">0.00</div>
<div class="t" style="right:804.3px;top:482.60px;font-size:11px;color:#333;">0.00</div>
<div class="t" style="right:679.3px;top:482.60px;font-size:11px;color:#333;">0.00</div>
<div class="t" style="right:554.3px;top:482.60px;font-size:11px;color:#333;">0.00</div>
<div class="t" style="right:429.29999999999995px;top:482.60px;font-size:11px;color:#333;">0.00</div>
<div class="t" style="right:304.29999999999995px;top:482.60px;font-size:11px;color:#333;">0.00</div>
<div class="t" style="right:179.29999999999995px;top:482.60px;font-size:11px;color:#333;">0.00</div>
<div class="t" style="right:54.299999999999955px;top:482.60px;font-size:11px;color:#333;">0.00</div>
<div class="t" style="left:294.8px;top:500.60px;font-size:11px;color:#333;transform:scaleX(0.8920);transform-origin:left 0;">FEE ADVANCE</div>
<div class="t" style="right:929.3px;top:500.60px;font-size:11px;color:#333;">0.00</div>
<div class="t" style="right:804.3px;top:500.60px;font-size:11px;color:#333;">0.00</div>
<div class="t" style="right:679.3px;top:500.60px;font-size:11px;color:#333;">0.00</div>
<div class="t" style="right:554.3px;top:500.60px;font-size:11px;color:#333;">0.00</div>
<div class="t" style="right:429.29999999999995px;top:500.60px;font-size:11px;color:#333;">0.00</div>
<div class="t" style="right:304.29999999999995px;top:500.60px;font-size:11px;color:#333;">0.00</div>
<div class="t" style="right:179.29999999999995px;top:500.60px;font-size:11px;color:#333;">0.00</div>
<div class="t" style="right:54.299999999999955px;top:500.60px;font-size:11px;color:#333;">0.00</div>
<div class="t" style="left:294.8px;top:518.60px;font-size:11px;color:#333;transform:scaleX(0.8810);transform-origin:left 0;">FEE PHONE PAY</div>
<div class="t" style="right:929.3px;top:518.60px;font-size:11px;color:#333;">0.00</div>
<div class="t" style="right:804.3px;top:518.60px;font-size:11px;color:#333;">0.00</div>
<div class="t" style="right:679.3px;top:518.60px;font-size:11px;color:#333;">0.00</div>
<div class="t" style="right:554.3px;top:518.60px;font-size:11px;color:#333;">0.00</div>
<div class="t" style="right:429.29999999999995px;top:518.60px;font-size:11px;color:#333;">0.00</div>
<div class="t" style="right:304.29999999999995px;top:518.60px;font-size:11px;color:#333;">0.00</div>
<div class="t" style="right:179.29999999999995px;top:518.60px;font-size:11px;color:#333;">0.00</div>
<div class="t" style="right:54.299999999999955px;top:518.60px;font-size:11px;color:#333;">0.00</div>
<div class="t" style="left:294.8px;top:536.60px;font-size:11px;color:#333;transform:scaleX(0.8906);transform-origin:left 0;">SALES / USAGE TAX</div>
<div class="t" style="right:929.3px;top:536.60px;font-size:11px;color:#333;">0.00</div>
<div class="t" style="right:804.3px;top:536.60px;font-size:11px;color:#333;">0.00</div>
<div class="t" style="right:679.3px;top:536.60px;font-size:11px;color:#333;">0.00</div>
<div class="t" style="right:554.3px;top:536.60px;font-size:11px;color:#333;">0.00</div>
<div class="t" style="right:429.29999999999995px;top:536.60px;font-size:11px;color:#333;">0.00</div>
<div class="t" style="right:304.29999999999995px;top:536.60px;font-size:11px;color:#333;">0.00</div>
<div class="t" style="right:179.29999999999995px;top:536.60px;font-size:11px;color:#333;">0.00</div>
<div class="t" style="right:54.299999999999955px;top:536.60px;font-size:11px;color:#333;">0.00</div>
<div class="t" style="left:294.8px;top:554.60px;font-size:11px;color:#333;transform:scaleX(0.9119);transform-origin:left 0;">FEE DISPOSITION</div>
<div class="t" style="right:929.3px;top:554.60px;font-size:11px;color:#333;">0.00</div>
<div class="t" style="right:804.3px;top:554.60px;font-size:11px;color:#333;">0.00</div>
<div class="t" style="right:679.3px;top:554.60px;font-size:11px;color:#333;">0.00</div>
<div class="t" style="right:554.3px;top:554.60px;font-size:11px;color:#333;">0.00</div>
<div class="t" style="right:429.29999999999995px;top:554.60px;font-size:11px;color:#333;">0.00</div>
<div class="t" style="right:304.29999999999995px;top:554.60px;font-size:11px;color:#333;">0.00</div>
<div class="t" style="right:179.29999999999995px;top:554.60px;font-size:11px;color:#333;">0.00</div>
<div class="t" style="right:54.299999999999955px;top:554.60px;font-size:11px;color:#333;">0.00</div>
<div class="t" style="left:294.8px;top:572.60px;font-size:11px;color:#333;transform:scaleX(0.8490);transform-origin:left 0;">FEE EXCESS USAGE</div>
<div class="t" style="right:929.3px;top:572.60px;font-size:11px;color:#333;">0.00</div>
<div class="t" style="right:804.3px;top:572.60px;font-size:11px;color:#333;">0.00</div>
<div class="t" style="right:679.3px;top:572.60px;font-size:11px;color:#333;">0.00</div>
<div class="t" style="right:554.3px;top:572.60px;font-size:11px;color:#333;">0.00</div>
<div class="t" style="right:429.29999999999995px;top:572.60px;font-size:11px;color:#333;">0.00</div>
<div class="t" style="right:304.29999999999995px;top:572.60px;font-size:11px;color:#333;">0.00</div>
<div class="t" style="right:179.29999999999995px;top:572.60px;font-size:11px;color:#333;">0.00</div>
<div class="t" style="right:54.299999999999955px;top:572.60px;font-size:11px;color:#333;">0.00</div>
<div class="t" style="left:294.8px;top:590.60px;font-size:11px;color:#333;transform:scaleX(0.9010);transform-origin:left 0;">OTHER FEE AND TAX</div>
<div class="t" style="right:929.3px;top:590.60px;font-size:11px;color:#333;">0.00</div>
<div class="t" style="right:804.3px;top:590.60px;font-size:11px;color:#333;">0.00</div>
<div class="t" style="right:679.3px;top:590.60px;font-size:11px;color:#333;">0.00</div>
<div class="t" style="right:554.3px;top:590.60px;font-size:11px;color:#333;">0.00</div>
<div class="t" style="right:429.29999999999995px;top:590.60px;font-size:11px;color:#333;">0.00</div>
<div class="t" style="right:304.29999999999995px;top:590.60px;font-size:11px;color:#333;">0.00</div>
<div class="t" style="right:179.29999999999995px;top:590.60px;font-size:11px;color:#333;">0.00</div>
<div class="t" style="right:54.299999999999955px;top:590.60px;font-size:11px;color:#333;">0.00</div>
<div class="t" style="left:294.8px;top:608.60px;font-size:11px;color:#333;transform:scaleX(0.9099);transform-origin:left 0;">FEE EARLY TERMINATION</div>
<div class="t" style="right:929.3px;top:608.60px;font-size:11px;color:#333;">0.00</div>
<div class="t" style="right:804.3px;top:608.60px;font-size:11px;color:#333;">0.00</div>
<div class="t" style="right:679.3px;top:608.60px;font-size:11px;color:#333;">0.00</div>
<div class="t" style="right:554.3px;top:608.60px;font-size:11px;color:#333;">0.00</div>
<div class="t" style="right:429.29999999999995px;top:608.60px;font-size:11px;color:#333;">0.00</div>
<div class="t" style="right:304.29999999999995px;top:608.60px;font-size:11px;color:#333;">0.00</div>
<div class="t" style="right:179.29999999999995px;top:608.60px;font-size:11px;color:#333;">0.00</div>
<div class="t" style="right:54.299999999999955px;top:608.60px;font-size:11px;color:#333;">0.00</div>
<div class="t" style="left:294.8px;top:626.60px;font-size:11px;color:#333;transform:scaleX(0.9337);transform-origin:left 0;">TERMINATION</div>
<div class="t" style="right:929.3px;top:626.60px;font-size:11px;color:#333;">0.00</div>
<div class="t" style="right:804.3px;top:626.60px;font-size:11px;color:#333;">0.00</div>
<div class="t" style="right:679.3px;top:626.60px;font-size:11px;color:#333;">0.00</div>
<div class="t" style="right:554.3px;top:626.60px;font-size:11px;color:#333;">0.00</div>
<div class="t" style="right:429.29999999999995px;top:626.60px;font-size:11px;color:#333;">0.00</div>
<div class="t" style="right:304.29999999999995px;top:626.60px;font-size:11px;color:#333;">0.00</div>
<div class="t" style="right:179.29999999999995px;top:626.60px;font-size:11px;color:#333;">0.00</div>
<div class="t" style="right:54.299999999999955px;top:626.60px;font-size:11px;color:#333;">0.00</div>
<div class="t" style="left:294.8px;top:644.60px;font-size:11px;color:#333;transform:scaleX(0.8858);transform-origin:left 0;">INVENTORY</div>
<div class="t" style="right:929.3px;top:644.60px;font-size:11px;color:#333;">0.00</div>
<div class="t" style="right:804.3px;top:644.60px;font-size:11px;color:#333;">0.00</div>
<div class="t" style="right:679.3px;top:644.60px;font-size:11px;color:#333;">0.00</div>
<div class="t" style="right:554.3px;top:644.60px;font-size:11px;color:#333;">0.00</div>
<div class="t" style="right:429.29999999999995px;top:644.60px;font-size:11px;color:#333;">0.00</div>
<div class="t" style="right:304.29999999999995px;top:644.60px;font-size:11px;color:#333;">0.00</div>
<div class="t" style="right:179.29999999999995px;top:644.60px;font-size:11px;color:#333;">0.00</div>
<div class="t" style="right:54.299999999999955px;top:644.60px;font-size:11px;color:#333;">0.00</div>
<div class="a" style="left:387px;top:661px;width:1px;height:17px;background:#dde2e8"></div>
<div class="t" style="left:1377.3px;top:664.80px;font-size:11px;color:#4a4a4a;transform:scaleX(0.9769);transform-origin:left 0;">Current Balance Total</div>
<div class="t" style="right:59px;top:664.80px;font-size:11px;color:#4a4a4a;transform:scaleX(1.0076);transform-origin:right 0;">9,322.00</div>
<div class="a" style="left:1361px;top:661px;width:1px;height:17px;background:#dde2e8"></div>
<div class="a" style="left:231px;top:390px;width:7px;height:22px;background:#c9ddf3;border:1px solid #b7cde8"></div>
<svg style="left:232px;top:397px" width="5" height="8"><path d="M4.5 0.5 L0.5 4 L4.5 7.5 Z" fill="#000"/></svg>
<svg style="left:132px;top:114px" width="16" height="25"><path d="M0.5 0.5 V20 L4.8 15.6 L8.6 22.8 L11.2 21.6 L7.6 14.4 L13.8 13.8 Z" fill="#fff" stroke="#000" stroke-width="1" stroke-linejoin="miter"/></svg>
<div class="a" style="left:1572px;top:401px;width:7px;height:22px;background:#c9ddf3;border:1px solid #b7cde8"></div>
<svg style="left:1573.5px;top:408px" width="5" height="8"><path d="M4.5 0.5 L0.5 4 L4.5 7.5 Z" fill="#000"/></svg>
</body></html>
